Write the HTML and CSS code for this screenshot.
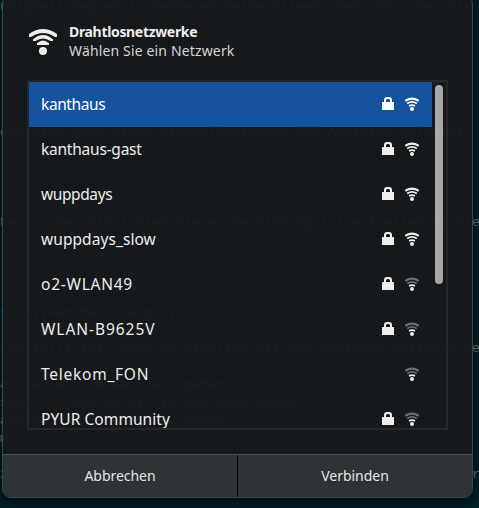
FILE: index.html
```html
<!DOCTYPE html>
<html lang="de">
<head>
<meta charset="utf-8">
<title>Drahtlosnetzwerke</title>
<link rel="stylesheet" href="styles.css">
</head>
<body>
<svg class="defs" aria-hidden="true">
  <symbol id="lock" viewBox="0 0 12 13"><path fill="currentColor" fill-rule="evenodd" d="M2 5V3Q2 0 5 0H7Q10 0 10 3V5H11.4Q12 5 12 5.6V13H0V5.6Q0 5 .6 5ZM4 5H8V3.5Q8 2 6.5 2H5.5Q4 2 4 3.5Z"/></symbol>
  <symbol id="wifi" viewBox="0 0 28 26">
    <g fill="currentColor">
      <g class="outer"><path d="M0 5Q14-5 28 5V8H26Q14 .2 2 8H0Z"/><path d="M4 10.3Q14 1.7 24 10.3V12H21.500Q14 7 6.500 12H4Z"/></g>
      <path d="M8 14.3Q14 8.700 20 14.300V16H8Z"/>
      <circle cx="14" cy="22" r="4"/>
    </g>
  </symbol>
  <symbol id="signal" viewBox="0 0 14 14">
    <g fill="none" stroke="currentColor">
      <g class="outer"><path stroke-width="2.1" d="M.2 3.900Q7-.7 13.800 3.900"/><path stroke-width="1.8" d="M2.200 6.600Q7 3.300 11.800 6.600"/></g>
      <path stroke-width="1.9" d="M4 8.800Q7 7.500 10 8.800"/>
    </g>
    <circle cx="7" cy="12" r="2" fill="currentColor"/>
  </symbol>
</svg>
<div class="desktop">
<pre class="terminal">ndigkeit begrenzt: Denke an deine Mitmenschen und schau dir






ehr wird über einen niederländischen VPN-Anbieter geleitet.




haus". Das Einrichten dieser Verbindung ist auf allen Geräte




roid](kanthaus_ca.p12)

rgestellt ist, dass du wirklich mit dem Kanthaus Netzwerk ve

ass es dir im Kanthaus geben
sswort: lass es dir im Kanthaus geben
ass es dir im Kanthaus geben
m

z                                                          r</pre>
<section class="dialog">
  <header class="header">
    <svg class="header-icon"><use href="#wifi"/></svg>
    <div><h1 class="title">Drahtlosnetzwerke</h1><p class="subtitle">Wählen Sie ein Netzwerk</p></div>
  </header>
  <div class="list">
    <div class="rows">
      <div class="row selected"><span class="name tight">kanthaus</span><svg class="lock"><use href="#lock"/></svg><svg class="signal"><use href="#signal"/></svg></div>
      <div class="row"><span class="name snug">kanthaus-gast</span><svg class="lock"><use href="#lock"/></svg><svg class="signal"><use href="#signal"/></svg></div>
      <div class="row"><span class="name tight">wuppdays</span><svg class="lock"><use href="#lock"/></svg><svg class="signal"><use href="#signal"/></svg></div>
      <div class="row"><span class="name">wuppdays_slow</span><svg class="lock"><use href="#lock"/></svg><svg class="signal"><use href="#signal"/></svg></div>
      <div class="row"><span class="name wide">o2-WLAN49</span><svg class="lock"><use href="#lock"/></svg><svg class="signal weak"><use href="#signal"/></svg></div>
      <div class="row"><span class="name wider">WLAN-B9625V</span><svg class="lock"><use href="#lock"/></svg><svg class="signal weak"><use href="#signal"/></svg></div>
      <div class="row"><span class="name wide">Telekom_FON</span><svg class="signal weak"><use href="#signal"/></svg></div>
      <div class="row"><span class="name">PYUR Community</span><svg class="lock"><use href="#lock"/></svg><svg class="signal weak"><use href="#signal"/></svg></div>
    </div>
    <div class="scrollbar"><div class="thumb"></div></div>
  </div>
  <footer class="actions"><button class="button">Abbrechen</button><button class="button">Verbinden</button></footer>
</section>
</div>
</body>
</html>
```

FILE: styles.css
```css
* { box-sizing: border-box; }
body { margin: 0; overflow: hidden; background: #00222b; }
.defs { position: absolute; width: 0; height: 0; }
.desktop { position: relative; width: 479px; height: 508px; overflow: hidden; }
.terminal {
  margin: -2px 0 0;
  color: #72858a;
  font: 13.33px/18px "Liberation Mono", monospace;
}
.dialog {
  position: absolute;
  left: 2px;
  top: -5px;
  width: 471px;
  height: 503px;
  display: flex;
  flex-direction: column;
  border: 1px solid #3c4446;
  border-radius: 9px;
  background: rgba(22, 25, 27, .955);
  box-shadow: 0 3px 12px 4px rgba(0, 0, 0, .5);
  color: #eeeeec;
  font-family: "Noto Sans", sans-serif;
  overflow: hidden;
}
.header { display: flex; height: 84px; flex: none; padding: 26px 0 0 26px; gap: 12px; }
.header-icon { width: 28px; height: 26px; margin-top: 7px; }
.title, .subtitle { margin: 0; line-height: 19px; white-space: nowrap; }
.title { font-size: 14px; font-weight: 700; letter-spacing: -.33px; }
.subtitle { font-size: 14px; color: #d5d5d3; letter-spacing: .15px; }
.list { display: flex; flex: none; width: 421px; height: 350px; margin-left: 24px; border: 2px solid #262727; overflow: hidden; }
.rows { width: 403px; }
.row { display: flex; height: 45px; padding: 0 12px; align-items: center; }
.selected { background: #15539e; color: #fff; }
.name { flex: 1; margin-top: -2px; font-size: 15.5px; line-height: 22px; letter-spacing: .07px; white-space: nowrap; }
.tight { letter-spacing: -.4px; }
.snug { letter-spacing: -.23px; }
.wide { letter-spacing: .75px; }
.wider { letter-spacing: .95px; }
.lock { width: 12px; height: 13px; margin-top: -2px; }
.signal { width: 14px; height: 14px; margin: -1px 1px 0 11px; }
.weak { --outer: .4; }
.outer { opacity: var(--outer, 1); }
.scrollbar { padding: 3px; }
.thumb { width: 8px; height: 199px; border-radius: 4px; background: #a8a8a6; }
.actions { display: flex; flex: 1; margin-top: 24px; border-top: 1px solid #485154; }
.button { flex: 1; padding: 0; border: 0; background: #2e3436; color: #e3e5e3; font: 14px/20px "Noto Sans", sans-serif; letter-spacing: -.03px; }
.button + .button { border-left: 1px solid #050606; }
```
